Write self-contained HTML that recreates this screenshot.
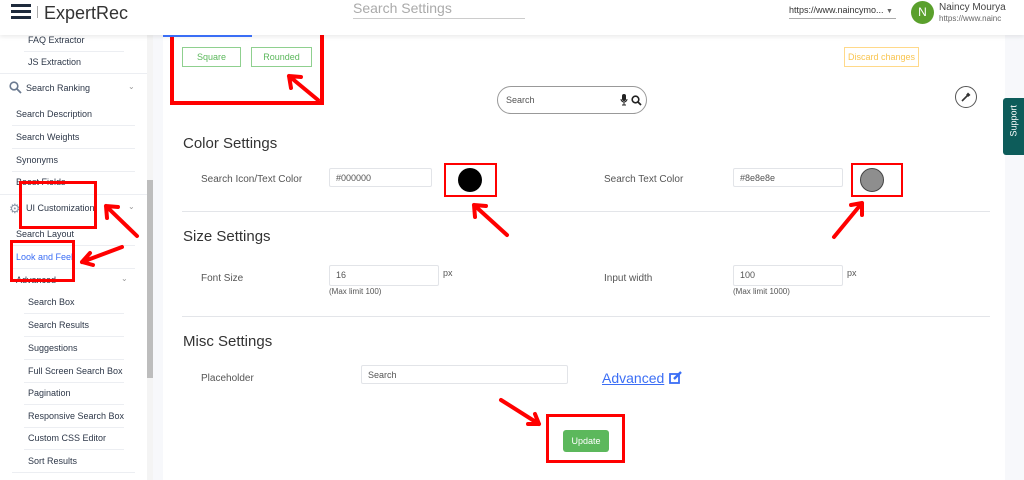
<!DOCTYPE html>
<html><head><meta charset="utf-8"><style>
*{box-sizing:border-box;margin:0;padding:0}
body{width:1024px;height:480px;overflow:hidden;background:#fff;font-family:"Liberation Sans",sans-serif;color:#333;position:relative}
.a{position:absolute;white-space:nowrap}
.sb{font-size:9px;color:#2d3748}
.sep{position:absolute;height:1px;background:#eceef2}
.inp{position:absolute;border:1px solid #e2e4e8;border-radius:2px;font-size:9px;color:#555;padding:4px 6px;background:#fff}
.lbl{font-size:10px;color:#555}
.h{font-size:15px;color:#333}
.rb{position:absolute;border:3px solid #f00}
</style></head><body>
<div class="a" style="left:0;top:0;width:1024px;height:35px;background:#fff;box-shadow:0 2px 4px rgba(0,0,0,.08);z-index:2"></div>
<div class="a" style="left:11px;top:4px;width:20px;height:3px;background:#1e2a3c;z-index:3"></div>
<div class="a" style="left:11px;top:10px;width:20px;height:3px;background:#1e2a3c;z-index:3"></div>
<div class="a" style="left:11px;top:16px;width:20px;height:3px;background:#1e2a3c;z-index:3"></div>
<div class="a" style="left:37px;top:6px;width:1px;height:12px;background:#aaa;z-index:3"></div>
<div class="a" style="left:44px;top:3px;font-size:18px;color:#333;z-index:3">ExpertRec</div>
<div class="a" style="left:353px;top:0px;width:172px;height:19px;border-bottom:1px solid #ccc;font-size:14px;color:#aaa;z-index:3">Search Settings</div>
<div class="a" style="left:789px;top:5px;width:107px;height:14px;border-bottom:1px solid #aaa;font-size:9px;color:#333;z-index:3">https://www.naincymo... <span style="font-size:7px;color:#666">▼</span></div>
<div class="a" style="left:911px;top:1px;width:23px;height:23px;border-radius:50%;background:#5aa02c;color:#fff;font-size:12px;text-align:center;line-height:23px;z-index:3">N</div>
<div class="a" style="left:939px;top:2px;font-size:10px;color:#444;z-index:3">Naincy Mourya</div>
<div class="a" style="left:939px;top:14px;font-size:8px;color:#666;width:62px;overflow:hidden;z-index:3">https://www.naincymourya</div>
<div class="a sb" style="left:28px;top:35px">FAQ Extractor</div>
<div class="sep" style="left:24px;top:51px;width:100px"></div>
<div class="a sb" style="left:28px;top:57px">JS Extraction</div>
<div class="sep" style="left:0;top:73px;width:147px"></div>
<svg class="a" style="left:9px;top:81px" width="13" height="13" viewBox="0 0 13 13"><circle cx="5" cy="5" r="3.8" fill="none" stroke="#6b7a90" stroke-width="1.6"/><path d="M8 8l4 4" stroke="#6b7a90" stroke-width="1.8"/></svg>
<div class="a sb" style="left:26px;top:83px">Search Ranking</div>
<div class="a" style="left:128px;top:82px;font-size:8px;color:#999">⌄</div>
<div class="a sb" style="left:16px;top:109px">Search Description</div>
<div class="sep" style="left:12px;top:125px;width:123px"></div>
<div class="a sb" style="left:16px;top:132px">Search Weights</div>
<div class="sep" style="left:12px;top:148px;width:123px"></div>
<div class="a sb" style="left:16px;top:155px">Synonyms</div>
<div class="sep" style="left:12px;top:171px;width:123px"></div>
<div class="a sb" style="left:16px;top:177px">Boost Fields</div>
<div class="sep" style="left:0;top:194px;width:147px"></div>
<div class="a" style="left:9px;top:201px;font-size:13px;color:#8a96a8">⚙</div>
<div class="a sb" style="left:26px;top:203px">UI Customization</div>
<div class="a" style="left:128px;top:202px;font-size:8px;color:#999">⌄</div>
<div class="a sb" style="left:16px;top:229px">Search Layout</div>
<div class="sep" style="left:12px;top:245px;width:123px"></div>
<div class="a sb" style="left:16px;top:252px;color:#3b6ef5">Look and Feel</div>
<div class="sep" style="left:12px;top:268px;width:123px"></div>
<div class="a sb" style="left:16px;top:275px">Advanced</div>
<div class="a" style="left:121px;top:274px;font-size:8px;color:#999">⌄</div>
<div class="a sb" style="left:28px;top:297px">Search Box</div>
<div class="sep" style="left:24px;top:313px;width:100px"></div>
<div class="a sb" style="left:28px;top:320px">Search Results</div>
<div class="sep" style="left:24px;top:336px;width:100px"></div>
<div class="a sb" style="left:28px;top:343px">Suggestions</div>
<div class="sep" style="left:24px;top:359px;width:100px"></div>
<div class="a sb" style="left:28px;top:366px">Full Screen Search Box</div>
<div class="sep" style="left:24px;top:382px;width:100px"></div>
<div class="a sb" style="left:28px;top:388px">Pagination</div>
<div class="sep" style="left:24px;top:404px;width:100px"></div>
<div class="a sb" style="left:28px;top:411px">Responsive Search Box</div>
<div class="sep" style="left:24px;top:427px;width:100px"></div>
<div class="a sb" style="left:28px;top:433px">Custom CSS Editor</div>
<div class="sep" style="left:24px;top:449px;width:100px"></div>
<div class="a sb" style="left:28px;top:456px">Sort Results</div>
<div class="sep" style="left:12px;top:472px;width:123px"></div>
<div class="a" style="left:147px;top:35px;width:6px;height:445px;background:#f4f4f4"></div>
<div class="a" style="left:147px;top:180px;width:6px;height:198px;background:#bdbdbd"></div>
<div class="a" style="left:153px;top:35px;width:10px;height:445px;background:#f7f8fb"></div>
<div class="a" style="left:1005px;top:35px;width:19px;height:445px;background:#f7f8fb"></div>
<div class="a" style="left:163px;top:35px;width:89px;height:2px;background:#3b6ef5;z-index:3"></div>
<div class="a" style="left:182px;top:47px;width:59px;height:20px;border:1px solid #8fd08f;color:#5cb85c;font-size:9px;text-align:center;line-height:18px">Square</div>
<div class="a" style="left:251px;top:47px;width:61px;height:20px;border:1px solid #8fd08f;color:#5cb85c;font-size:9px;text-align:center;line-height:18px">Rounded</div>
<div class="a" style="left:844px;top:47px;width:75px;height:20px;border:1px solid #ffd98a;color:#f9c550;font-size:9px;text-align:center;line-height:18px">Discard changes</div>
<div class="a" style="left:497px;top:86px;width:150px;height:28px;border:1px solid #999;border-radius:14px"></div>
<div class="a" style="left:506px;top:95px;font-size:9px;color:#555">Search</div>
<svg class="a" style="left:620px;top:94px" width="8" height="12" viewBox="0 0 8 12"><rect x="2" y="0" width="4" height="7" rx="2" fill="#222"/><path d="M1 5a3 3 0 0 0 6 0M4 8v3M2 11h4" stroke="#222" stroke-width="1" fill="none"/></svg>
<svg class="a" style="left:631px;top:95px" width="11" height="11" viewBox="0 0 11 11"><circle cx="4.5" cy="4.5" r="3.3" fill="none" stroke="#222" stroke-width="1.6"/><path d="M7 7l3 3" stroke="#222" stroke-width="1.8"/></svg>
<div class="a" style="left:955px;top:86px;width:22px;height:22px;border:1px solid #555;border-radius:50%"></div>
<svg class="a" style="left:960px;top:91px" width="12" height="12" viewBox="0 0 12 12"><path d="M2 10l5-5" stroke="#333" stroke-width="1.6"/><path d="M6 4l2-2.5 2.5 2.5L8 6z" fill="#333"/></svg>
<div class="a" style="left:1003px;top:98px;width:21px;height:57px;background:#0d5c5a;border-radius:3px 0 0 3px"></div>
<div class="a" style="left:1003px;top:121px;color:#fff;font-size:9px;transform:rotate(-90deg);transform-origin:center;width:21px;text-align:center">Support</div>
<div class="a h" style="left:183px;top:135px">Color Settings</div>
<div class="a lbl" style="left:201px;top:174px">Search Icon/Text Color</div>
<div class="inp" style="left:329px;top:168px;width:103px;height:19px">#000000</div>
<div class="a" style="left:458px;top:168px;width:24px;height:24px;border-radius:50%;background:#000"></div>
<div class="a lbl" style="left:604px;top:174px">Search Text Color</div>
<div class="inp" style="left:733px;top:168px;width:110px;height:19px">#8e8e8e</div>
<div class="a" style="left:860px;top:168px;width:24px;height:24px;border-radius:50%;background:#8e8e8e;border:1px solid #444"></div>
<div class="sep" style="left:182px;top:211px;width:808px;background:#e3e5e9"></div>
<div class="a h" style="left:183px;top:228px">Size Settings</div>
<div class="a lbl" style="left:201px;top:273px">Font Size</div>
<div class="inp" style="left:329px;top:265px;width:110px;height:21px">16</div>
<div class="a" style="left:443px;top:268px;font-size:9px;color:#555">px</div>
<div class="a" style="left:329px;top:287px;font-size:8px;color:#555">(Max limit 100)</div>
<div class="a lbl" style="left:604px;top:273px">Input width</div>
<div class="inp" style="left:733px;top:265px;width:110px;height:21px">100</div>
<div class="a" style="left:847px;top:268px;font-size:9px;color:#555">px</div>
<div class="a" style="left:733px;top:287px;font-size:8px;color:#555">(Max limit 1000)</div>
<div class="sep" style="left:182px;top:316px;width:808px;background:#e3e5e9"></div>
<div class="a h" style="left:183px;top:333px">Misc Settings</div>
<div class="a lbl" style="left:201px;top:373px">Placeholder</div>
<div class="inp" style="left:361px;top:365px;width:207px;height:19px">Search</div>
<div class="a" style="left:602px;top:370px;font-size:14px;color:#3b6ef5;text-decoration:underline">Advanced</div>
<svg class="a" style="left:669px;top:371px" width="14" height="13" viewBox="0 0 14 13"><rect x="1" y="3" width="9" height="9" fill="none" stroke="#3b6ef5" stroke-width="1.8"/><path d="M5 8l7-7" stroke="#3b6ef5" stroke-width="2.4"/></svg>
<div class="a" style="left:563px;top:430px;width:46px;height:22px;background:#5cb85c;border-radius:3px;color:#fff;font-size:9px;text-align:center;line-height:22px">Update</div>
<div class="rb" style="left:170px;top:11px;width:154px;height:94px;border-width:4px"></div>
<div class="rb" style="left:19px;top:181px;width:78px;height:48px"></div>
<div class="rb" style="left:10px;top:240px;width:65px;height:42px"></div>
<div class="rb" style="left:444px;top:163px;width:53px;height:34px;border-width:2px"></div>
<div class="rb" style="left:851px;top:163px;width:52px;height:34px;border-width:2px"></div>
<div class="rb" style="left:546px;top:414px;width:79px;height:49px"></div>
<svg class="a" style="left:0;top:0" width="1024" height="480">
<g stroke="#f00" stroke-width="4" fill="none" stroke-linecap="round">
<path d="M318 100L289 76M289 76l12 1M289 76l2 12"/>
<path d="M137 236L106 206M106 206l12 1M106 206l1 12"/>
<path d="M122 247L82 262M82 262l8-9M82 262l11 3"/>
<path d="M507 235L474 205M474 205l12 1M474 205l1 12"/>
<path d="M834 237L862 203M862 203l-11 2M862 203l0 12"/>
<path d="M501 400L539 424M539 424l-11 0M539 424l-4-10"/>
</g></svg>
</body></html>
